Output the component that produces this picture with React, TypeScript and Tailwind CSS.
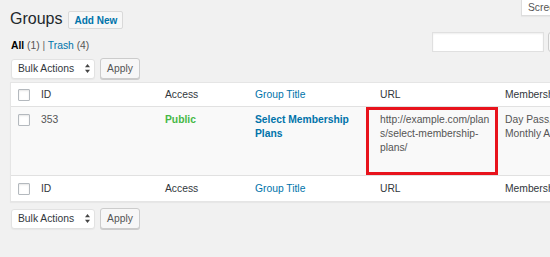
import React from "react";

const font = { fontFamily: '"Liberation Sans", Arial, sans-serif' };

function Checkbox() {
  return (
    <div className="w-[12px] h-[12px] border border-[#b4b9be] bg-white rounded-[1px] shadow-[inset_0_1px_2px_rgba(0,0,0,0.1)]" />
  );
}

function SelectArrows() {
  return (
    <svg width="5" height="9" viewBox="0 0 5 9" className="shrink-0">
      <path d="M2.5 0 L5 3.2 L0 3.2 Z" fill="#444" />
      <path d="M2.5 9 L5 5.8 L0 5.8 Z" fill="#444" />
    </svg>
  );
}

function TableNav() {
  return (
    <div className="flex items-center gap-[5px]">
      <div className="w-[84px] h-[20px] bg-white border border-[#e2e2e2] rounded-[3px] shadow-[0_1px_1px_rgba(0,0,0,0.04)] flex items-center justify-between pl-[6px] pr-[4px] text-[10.3px] text-[#32373c]">
        <span>Bulk Actions</span>
        <SelectArrows />
      </div>
      <div className="w-[40px] h-[21px] bg-[#f7f7f7] border border-[#cccccc] rounded-[3px] shadow-[0_1px_0_#cccccc] flex items-center justify-center text-[10.3px] text-[#555]">
        Apply
      </div>
    </div>
  );
}

function HeaderRow({ top }: { top?: boolean }) {
  return (
    <div
      className={
        "flex items-center text-[10.3px] bg-white " +
        (top ? "h-[24px] border-b border-[#e1e1e1]" : "h-[26px] border-t border-[#e1e1e1]")
      }
    >
      <div className="w-[30px] shrink-0 pl-[7px] flex items-center">
        <Checkbox />
      </div>
      <div className="w-[124px] shrink-0 text-[#32373c]">ID</div>
      <div className="w-[90px] shrink-0 text-[#32373c]">Access</div>
      <div className="w-[111px] shrink-0 text-[#0073aa]">Group Title</div>
      <div className="w-[139px] shrink-0 pl-[14px] text-[#32373c]">URL</div>
      <div className="w-[150px] shrink-0 text-[#32373c] whitespace-nowrap">Membership Levels</div>
    </div>
  );
}

export default function App() {
  return (
    <div
      className="w-[550px] h-[257px] overflow-hidden bg-[#f1f1f1] pl-[10px]"
      style={font}
    >
      {/* Row 1 */}
      <div className="flex justify-between items-start">
        <div className="flex items-start">
          <div className="mt-[10px] h-[18px] leading-[18px] text-[16px] text-[#23282d]">Groups</div>
          <div className="ml-[6px] mt-[11px] h-[18px] px-[5px] flex items-center bg-[#f7f7f7] border border-[#d9d9d9] rounded-[2px] text-[10px] font-bold text-[#0073aa] whitespace-nowrap">
            Add New
          </div>
        </div>
        <div className="w-[29px] shrink-0">
          <div className="w-[90px] h-[16px] bg-white border border-t-0 border-[#dddddd] shadow-[0_1px_1px_rgba(0,0,0,0.04)] pl-[6px] flex items-center text-[10.3px] text-[#555] whitespace-nowrap">
            Screen Options
          </div>
        </div>
      </div>

      {/* Row 2 */}
      <div className="flex items-start mt-[3px]">
        <div className="flex-1 min-w-0 pt-[7px] pl-[1px] text-[10.3px] leading-[14px] whitespace-nowrap">
          <span className="font-bold text-black">All</span>{" "}
          <span className="text-[#555]">(1)</span>
          <span className="text-[#666]"> | </span>
          <span className="text-[#0073aa]">Trash</span>{" "}
          <span className="text-[#555]">(4)</span>
        </div>
        <div className="w-[112px] h-[20px] shrink-0 bg-white border border-[#e0e0e0] shadow-[inset_0_1px_2px_rgba(0,0,0,0.07)]" />
        <div className="w-[6px] shrink-0">
          <div className="ml-[4px] w-[80px] h-[20px] bg-[#f7f7f7] border border-[#cccccc] rounded-[3px]" />
        </div>
      </div>

      {/* Row 3 */}
      <div className="mt-[5px] pl-[1px]">
        <TableNav />
      </div>

      {/* Table */}
      <div className="mt-[3px] w-[620px] bg-white border border-[#e5e5e5] shadow-[0_1px_1px_rgba(0,0,0,0.04)]">
        <HeaderRow top />
        <div className="flex items-start h-[68px] bg-[#f9f9f9] text-[10.3px] leading-[14px]">
          <div className="w-[30px] shrink-0 pl-[7px] pt-[7px]">
            <Checkbox />
          </div>
          <div className="w-[124px] shrink-0 pt-[6px] text-[#555]">353</div>
          <div className="w-[90px] shrink-0 pt-[6px] font-bold text-[#45b845]">Public</div>
          <div className="w-[111px] shrink-0 pt-[6px] font-bold text-[#0073aa] whitespace-nowrap">
            Select Membership
            <br />
            Plans
          </div>
          <div className="w-[139px] shrink-0 h-full">
            <div className="w-[132px] h-full border-[3px] border-[#e8131c] pl-[11px] pt-[3px] text-[#555] whitespace-nowrap">
              http://example.com/plan
              <br />
              s/select-membership-
              <br />
              plans/
            </div>
          </div>
          <div className="w-[150px] shrink-0 pt-[6px] text-[#555] whitespace-nowrap">
            Day Pass, Weekly,
            <br />
            Monthly Access
          </div>
        </div>
        <HeaderRow />
      </div>

      {/* Bottom nav */}
      <div className="mt-[6px] pl-[1px]">
        <TableNav />
      </div>
    </div>
  );
}
